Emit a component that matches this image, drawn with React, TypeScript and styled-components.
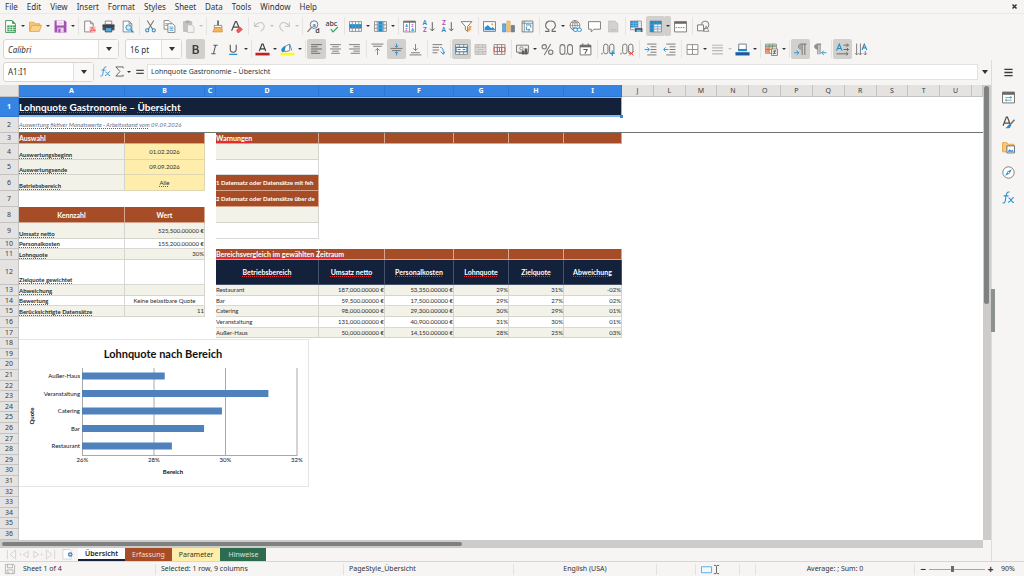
import React from "react";
import styled, { createGlobalStyle, css } from "styled-components";

const INK = "#3a3a38";
const GREY = "#797774";
const BLUE = "#1e8bcd";
const NAVY = "#14213a";
const RUST = "#a64d28";
const CREAM = "#f3f2e8";
const YELLOW = "#ffeeab";
const UI = `"Noto Sans", "Open Sans", sans-serif`;
const SHEET = `Lato, "Noto Sans", sans-serif`;

const Global = createGlobalStyle`
  * { box-sizing: border-box; }
  html, body, #root { height: 100%; margin: 0; }
  body { background: #f6f5f4; font-family: ${UI}; color: #2e3436; overflow: hidden; }
  button, input { font: inherit; color: inherit; margin: 0; padding: 0; border: 0; background: none; }
  svg { display: block; }
`;

/* ---------- icons ---------- */

const txt = (x: number, y: number, s: string, fill: string, size = 11, extra: React.SVGProps<SVGTextElement> = {}) => (
  <text x={x} y={y} fill={fill} fontSize={size} fontFamily="Noto Sans" {...extra}>{s}</text>
);
const lines = (d: string, stroke = INK, w = 1.6) => <path d={d} stroke={stroke} strokeWidth={w} fill="none" />;
const page = (stroke = GREY, fill = "#fafafa") => (
  <path d="M4 2h11l5 5v15H4zM15 2v5h5" fill={fill} stroke={stroke} strokeWidth="1.5" />
);
const grid = (stroke = GREY) => (
  <path d="M1 3h22v18H1zM1 9h22M1 15h22M6 3v18M12 3v18M18 3v18" fill="#fff" stroke={stroke} strokeWidth="1.4" />
);

const icons: Record<string, React.ReactNode> = {
  new: <><path d="M3 1h12l6 6v16H3z" fill="#fff" stroke="#309048" strokeWidth="1.6" /><path d="M15 1v6h6z" fill="#309048" /><path d="M6 10h15v11H6z" fill="#3f9f56" /><path d="M6 14h15M6 17.500h15M11 10v11M16 10v11" stroke="#fff" strokeWidth="1.1" /></>,
  open: <><path d="M1 20V4h8l2 3h9v4" fill="#f9c778" stroke="#e8a33d" strokeWidth="1.6" /><path d="M1 21l4-11h18l-4 11z" fill="#fbd28c" stroke="#e8a33d" strokeWidth="1.6" /></>,
  save: <><path d="M1 1h19l3 3v19H1z" fill="#a550b5" /><path d="M5 1h13v9H5z" fill="#fff" /><path d="M7 4h9M7 7h9" stroke="#d9a9e2" strokeWidth="1.3" /><path d="M6 14h12v9H6z" fill="#ead0ef" /><path d="M8 16h4v7H8z" fill="#a550b5" /></>,
  pdf: <><path d="M3 2h11l5 5v15H3zM14 2v5h5" fill="#fafafa" stroke={GREY} strokeWidth="1.500" /><path d="M12 12h11v11H12z" fill="#f7b4b3" /><path d="M13 21c3-2 4-5 4-8 1 5 3 6 6 6-4-1-7 0-10 2z" stroke="#ed3d3b" strokeWidth="1.300" fill="#fff" /></>,
  print: <><path d="M6 2h12v6H6z" fill="#fff" stroke={GREY} strokeWidth="1.6" /><path d="M1 8h22v11H1z" fill="#4c545a" /><path d="M1 11h22" stroke="#2f353a" strokeWidth="2" /><path d="M6 14h12v8H6z" fill="#56a9df" stroke="#33393d" strokeWidth="1.4" /></>,
  preview: <>{page()}<circle cx="14" cy="14" r="5" fill="#cfe6f7" stroke={BLUE} strokeWidth="1.7" /><path d="M18 18l5 5" stroke={BLUE} strokeWidth="2.2" /></>,
  cut: <><path d="M6 1l10 16M18 1L8 17" stroke={GREY} strokeWidth="2" /><circle cx="6" cy="19" r="3" fill="none" stroke={BLUE} strokeWidth="1.9" /><circle cx="18" cy="19" r="3" fill="none" stroke={BLUE} strokeWidth="1.9" /></>,
  copy: <><path d="M2 1h9l4 4v12H2z" fill="#fff" stroke={GREY} strokeWidth="1.5" /><path d="M4 7h6M4 10h5" stroke={BLUE} strokeWidth="1.3" /><path d="M9 7h9l4 4v12H9z" fill="#fff" stroke={GREY} strokeWidth="1.6" /><path d="M12 13h7M12 16h7M12 19h7" stroke={BLUE} strokeWidth="1.4" /></>,
  paste: <><path d="M3 3h15v18H3z" fill="#c4c4c2" stroke="#b0b0ae" strokeWidth="1.4" /><path d="M7 1h7v5H7z" fill="#aaa" /><path d="M10 9h8l4 4v10H10z" fill="#f2f2f1" stroke="#bcbcba" strokeWidth="1.4" /></>,
  clone: <><path d="M13 1v9" stroke="#5e5c5a" strokeWidth="3" /><path d="M6 10h14v4H6z" fill="#fff" stroke={GREY} strokeWidth="1.4" /><path d="M6 14h14l1 8H3c2-2 3-5 3-8z" fill="#f4b561" stroke="#d9912f" strokeWidth="1.4" /></>,
  clear: <><path d="M3 20L10 3h2l6 14M6 13h9" stroke="#4c4b49" strokeWidth="2.2" fill="none" /><path d="M12 19l6-6 5 4-6 6h-3z" fill="#ee5b58" stroke="#c9302d" /></>,
  undo: <path d="M3 4v8h8M3 12c5-8 12-9 16-5 4 5 1 10-5 14" stroke="#c6c5c3" strokeWidth="1.9" fill="none" />,
  redo: <path d="M21 4v8h-8M21 12C16 4 9 3 5 7c-4 5-1 10 5 14" stroke="#c6c5c3" strokeWidth="1.9" fill="none" />,
  find: <><circle cx="13" cy="8.500" r="7" fill="#f4fafe" stroke={GREY} strokeWidth="1.8" /><path d="M8 14l-7 8" stroke={GREY} strokeWidth="2.4" />{txt(9.5, 12, "a", BLUE, 11, { fontWeight: 700 })}{txt(15, 24, "d", INK, 13, { fontWeight: 600 })}</>,
  spell: <>{txt(-1, 11, "abc", INK, 13, { fontWeight: 500 })}<path d="M9 17l4 5 9-9" stroke="#36a266" strokeWidth="2.2" fill="none" /></>,
  row: <>{grid()}<path d="M1 8h22v7H1z" fill={BLUE} /><path d="M6 8v7M12 8v7M18 8v7" stroke="#6bb8e8" /></>,
  col: <>{grid()}<path d="M8 3h8v18H8z" fill={BLUE} /><path d="M8 9h8M8 15h8" stroke="#8ccaf0" /></>,
  sort: <><path d="M1 2h22v20H1z" fill="#fff" stroke={GREY} strokeWidth="1.5" /><path d="M1 2h22v3H1z" fill="#6a6967" /><path d="M12 4v18" stroke={GREY} strokeWidth="1.4" />{txt(4, 12, "A", BLUE, 7, { fontWeight: 700 })}{txt(4, 21, "Z", "#a550b5", 7, { fontWeight: 700 })}{txt(15, 12, "Z", "#a550b5", 7, { fontWeight: 700 })}{txt(15, 21, "A", BLUE, 7, { fontWeight: 700 })}</>,
  asc: <>{txt(1, 10, "A", BLUE, 12, { fontWeight: 600 })}{txt(2, 23, "Z", "#a550b5", 12, { fontWeight: 600 })}<path d="M19 4v16M15 16l4 4 4-4" stroke="#5d5c5a" strokeWidth="1.8" fill="none" /></>,
  desc: <>{txt(2, 10, "Z", "#a550b5", 12, { fontWeight: 600 })}{txt(1, 23, "A", BLUE, 12, { fontWeight: 600 })}<path d="M19 4v16M15 16l4 4 4-4" stroke="#5d5c5a" strokeWidth="1.8" fill="none" /></>,
  funnel: <><path d="M2 3h20l-8 9v9l-4-3v-6z" fill="#fff" stroke={GREY} strokeWidth="1.7" /><path d="M17 11h5l-3 5h3l-8 7 2-5h-2z" fill="#f4a93c" /></>,
  image: <><path d="M1 3h22v18H1z" fill="#fff" stroke={GREY} strokeWidth="1.7" /><path d="M3 19V14l6-5 6 6 3-2 4 4v2z" fill="#2f8fd0" /><circle cx="17" cy="8" r="2" fill="#f4a93c" /></>,
  chart: <><path d="M1 7h6v15H1z" fill="#5faee0" stroke="#337fb5" /><path d="M9 2h6v20H9z" fill="#f5c372" stroke="#dc9c3e" /><path d="M17 10h6v12h-6z" fill="#77808a" stroke="#5c636b" /></>,
  pivot: <><path d="M2 2h20v20H2z" fill="#fff" stroke={GREY} strokeWidth="1.7" /><path d="M2 6h20M6 2v20" stroke={GREY} strokeWidth="1.5" /><path d="M10 12v6h6M18 14V9h-6M12 7l-2 2 2 2M14 16l2 2-2 3" stroke={BLUE} strokeWidth="1.7" fill="none" /></>,
  omega: <path d="M2 21h7v-3C5 16 3 13 3 10c0-5 4-8 9-8s9 3 9 8c0 3-2 6-6 8v3h7" stroke="#6a6967" strokeWidth="1.9" fill="none" />,
  link: <><circle cx="11" cy="10" r="9" fill="#fff" stroke={GREY} strokeWidth="1.6" /><path d="M2 10h18M11 1v18M4 5h14M4 15h8M11 1c-6 5-6 13 0 18M11 1c6 5 6 13 0 18" stroke={GREY} strokeWidth="1.3" fill="none" /><rect x="8" y="15" width="8" height="6" rx="3" fill="#fff" stroke={BLUE} strokeWidth="1.7" /><rect x="15" y="15" width="8" height="6" rx="3" fill="#fff" stroke={BLUE} strokeWidth="1.7" /></>,
  comment: <path d="M1 3h22v14H11l-5 5v-5H1z" fill="#fff" stroke={GREY} strokeWidth="1.7" />,
  headfoot: <><path d="M3 2h12l5 5v15H3z" fill="#d2d2d0" stroke="#bbbab8" strokeWidth="1.4" /><path d="M6 18h11" stroke="#bbb" strokeWidth="2" /></>,
  printarea: <><path d="M1 2h20v16H1z" fill="#fff" stroke={GREY} strokeWidth="1.4" /><path d="M1 2h14v12H1z" fill={BLUE} /><path d="M1 6h20M1 10h20M1 14h20M6 2v16M11 2v16M16 2v16" stroke="#a7c9e0" strokeWidth="1.1" /><path d="M9 15h14v7H9z" fill="#4c545a" /><path d="M12 18h8v4h-8z" fill="#7bbde6" /></>,
  freeze: <><path d="M2 2h21v20H2z" fill="#fff" stroke={GREY} strokeWidth="1.4" /><path d="M2 2h21v6H2zM2 2h7v20H2z" fill={BLUE} /><path d="M2 8h21M9 2v20M16 2v20M2 15h21M9 12h14M9 18h14" stroke="#6b98b8" strokeWidth="1.2" /></>,
  split: <><path d="M1 3h22v19H1z" fill="#fff" stroke={GREY} strokeWidth="1.7" /><path d="M1 3h22v4H1z" fill="#6a6967" /><path d="M3 14h18" stroke={BLUE} strokeWidth="1.6" strokeDasharray="3 1.500" /></>,
  shapes: <><circle cx="15" cy="9" r="7" fill="none" stroke={GREY} strokeWidth="1.7" /><path d="M1 9h11v11H1z" fill="#fafafa" stroke={GREY} strokeWidth="1.7" /><path d="M12 21l5-10 5 10z" fill="none" stroke={GREY} strokeWidth="1.3" /></>,
  bold: <path transform="translate(3 3) scale(.75)" d="M5 1h8c8 0 8 9 3 10 7 1 7 12-2 12H5zM9 4v6h4c4 0 4-6 0-6zM9 13v7h4c5 0 5-7 0-7z" fill="#3f3e3c" fillRule="evenodd" />,
  italic: <path d="M10 4h8M6 20h8M14 4l-4 16" stroke="#5a5957" strokeWidth="1.900" fill="none" />,
  underline: <><path d="M6 3v8c0 8 11 8 11 0V3" stroke="#5a5957" strokeWidth="2" fill="none" /><path d="M4 21h15" stroke={BLUE} strokeWidth="2.200" /></>,
  fontcolor: <><path d="M6 15L11 2h2l5 13M8 11h8" stroke={INK} strokeWidth="2.200" fill="none" /><path d="M-1 18h26v5H-1z" fill="#c0211f" /></>,
  highlight: <><path d="M6 7l10-5v12l-9 2z" fill="#fff" stroke={GREY} strokeWidth="1.600" /><path d="M2 16c-2-6 2-9 6-9l-3 9zM16 2l4 12" fill={BLUE} stroke={BLUE} strokeWidth="1.500" /><path d="M-1 18h26v5H-1z" fill="#fbfb1e" /></>,
  left: lines("M2 3h20M2 7h12M2 11h20M2 15h12M2 19h17", "#5d5c5a"),
  center: lines("M2 3h20M6 7h12M2 11h20M6 15h12M4 19h16", "#6d6c6a"),
  right: lines("M2 3h20M10 7h12M2 11h20M10 15h12M5 19h17", "#6d6c6a"),
  top: <>{lines("M1 2h22M4 6h16", "#6d6c6a")}{lines("M12 22V10M8 14l4-4 4 4", BLUE)}</>,
  middle: <>{lines("M1 10h22M4 14h16", "#6d6c6a")}{lines("M12 1v7M9 5l3 3 3-3M12 23v-7M9 19l3-3 3 3", BLUE)}</>,
  bottom: <>{lines("M4 18h16M1 22h22", "#6d6c6a")}{lines("M12 2v12M8 10l4 4 4-4", BLUE)}</>,
  wrap: <>{lines("M1 3h18M1 8h12M1 13h12M1 18h9", "#6d6c6a")}{lines("M15 8c5 0 6 4 6 12M16 16l5 5 3-5", BLUE)}</>,
  mergecenter: <><path d="M1 3h22v18H1zM1 8h22M1 16h22M8 3v5M16 3v5M8 16v5M16 16v5" fill="#fff" stroke={GREY} strokeWidth="1.500" /><path d="M2 8h20v8H2z" fill="#fff" stroke={BLUE} strokeWidth="2" />{lines("M5 12h5M19 12h-5", BLUE, 2)}</>,
  merge: <path d="M2 3h20v18H2zM2 8h20M2 16h20M8 3v5M16 3v5M8 16v5M16 16v5M6 12h12" fill="#dcdcda" stroke="#b5b4b2" strokeWidth="1.500" />,
  unmerge: <><path d="M2 3h20v18H2zM8 3v18M16 3v18" fill="#fff" stroke={GREY} strokeWidth="1.500" /><path d="M2 8h20v8H2zM8 8v8M16 8v8M12 8v8" stroke="#e04a48" strokeWidth="1.700" fill="none" /></>,
  currency: <><path d="M1 4h22v13H1z" fill="#eee" stroke={GREY} strokeWidth="1.700" /><circle cx="10" cy="10" r="3" fill="none" stroke={GREY} strokeWidth="1.500" /><path d="M11 14h4v7h-4zM16 10h5v11h-5z" fill="#5d5c5a" /><path d="M5 19h18" stroke="#5d5c5a" strokeWidth="2" /></>,
  percent: <><circle cx="6" cy="7" r="4" fill="none" stroke={GREY} strokeWidth="2" /><circle cx="18" cy="17" r="4" fill="none" stroke={GREY} strokeWidth="2" /><path d="M18 2L6 22" stroke={GREY} strokeWidth="2" /></>,
  number: <><rect x="0" y="3" width="9" height="18" rx="4.500" fill="none" stroke={GREY} strokeWidth="1.900" /><rect x="14" y="3" width="9" height="18" rx="4.500" fill="none" stroke={GREY} strokeWidth="1.900" /><path d="M11.500 19v3" stroke={GREY} strokeWidth="1.700" /></>,
  date: <><path d="M2 4h20v18H2z" fill="#fff" stroke={GREY} strokeWidth="1.800" /><path d="M2 4h20v4H2z" fill="#6a6967" /><path d="M7 1v4M17 1v4" stroke="#6a6967" strokeWidth="2" /><path d="M8 12h7l-4 8" stroke="#5d5c5a" strokeWidth="1.900" fill="none" /></>,
  adddec: <><path d="M0 18v3" stroke={GREY} strokeWidth="2" /><rect x="3" y="2" width="8" height="18" rx="4" fill="none" stroke={GREY} strokeWidth="1.800" /><rect x="14" y="2" width="8" height="18" rx="4" fill="none" stroke={GREY} strokeWidth="1.800" /><path d="M14 19h10M19 14v10" stroke={BLUE} strokeWidth="2" /></>,
  deldec: <><path d="M0 18v3" stroke={GREY} strokeWidth="2" /><rect x="3" y="2" width="8" height="18" rx="4" fill="none" stroke={GREY} strokeWidth="1.800" /><rect x="14" y="2" width="8" height="18" rx="4" fill="none" stroke={GREY} strokeWidth="1.800" /><path d="M15 15l8 8M23 15l-8 8" stroke="#ed3d3b" strokeWidth="1.800" /></>,
  indent: <>{lines("M6 2h17M12 7h11M12 12h11M12 17h11M6 22h17", "#6d6c6a")}{lines("M1 12h8M6 8l4 4-4 4", BLUE)}</>,
  outdent: <>{lines("M6 2h17M12 7h11M12 12h11M12 17h11M6 22h17", "#6d6c6a")}{lines("M10 12H2M5 8l-4 4 4 4", BLUE)}</>,
  borders: <path d="M2 3h20v18H2zM12 3v18M2 12h20" fill="#fff" stroke="#8a8987" strokeWidth="1.700" />,
  borderstyle: lines("M2 4h20M2 9h20M2 14h20M2 20h20", "#b9b8b6", 2),
  bordercolor: <><path d="M5 2h14v12H5z" fill="#fff" stroke="#6a7a88" strokeWidth="1.700" /><path d="M4 11h16v4H4z" fill={BLUE} /><path d="M-1 17h26v6H-1z" fill="#1c5a9e" /></>,
  condformat: <><path d="M1 2h20v17H1z" fill="#fff" stroke={GREY} strokeWidth="1.400" /><path d="M2 3h18v4H2z" fill="#7fca8c" /><path d="M2 8h6v10H2z" fill="#ee8f6b" /><path d="M9 8h6v5H9z" fill="#f7cf7b" /><path d="M1 7h20M1 12h20M8 2v17M14 2v17" stroke={GREY} strokeWidth="1.200" /><path d="M12 11h11v12H12z" fill="#fff" stroke={GREY} strokeWidth="1.600" /><path d="M14 15h7M14 19h7M19 13l-3 8" stroke={INK} strokeWidth="1.300" /></>,
  ltr: <><path d="M23 2H13c-6 0-6 9 0 9h1M15 2v20M20 2v20" stroke="#6d6c6a" strokeWidth="1.700" fill="none" /><path d="M11 3h4v8h-3c-4-1-4-7-1-8z" fill="#a5a4a1" />{lines("M0 18h9M5 14l4 4-4 4", BLUE)}</>,
  rtl: <><path d="M15 2H8c-6 0-6 9 0 9h1M9 2v19M13 2v19" stroke="#6d6c6a" strokeWidth="1.700" fill="none" /><path d="M5 3h4v8H6C2 10 2 4 5 3z" fill="#8f8e8b" />{lines("M25 18h-9M20 14l-4 4 4 4", BLUE)}</>,
  textlr: <><path d="M1 14L6 2l5 12M3 10h6" stroke={BLUE} strokeWidth="2" fill="none" />{lines("M14 4h9M20 1l3 3-3 3M14 12h9M20 9l3 3-3 3M1 20h21M19 17l3 3-3 3", "#5d5c5a")}</>,
  texttb: <><path d="M13 13l4-11 5 11M14 9h6" stroke={BLUE} strokeWidth="2" fill="none" />{lines("M3 1v21M0 19l3 3 3-3M10 1v21M7 19l3 3 3-3M19 15v7M16 19l3 3 3-3", "#6d6c6a")}</>,
  fx: <><path d="M1 22c5 1 5-3 6-10s2-11 7-10M3 9h9" stroke="#2a8fd0" strokeWidth="2" fill="none" /><path d="M12 13c4-1 5 9 10 8M22 12c-4 0-6 9-11 9" stroke="#2a8fd0" strokeWidth="2" fill="none" /></>,
  sigma: <path d="M20 5V2H4l9 10-9 10h16v-3" stroke="#5d5c5a" strokeWidth="2" fill="none" />,
  equals: <path d="M3 8h18M3 15h18" stroke="#4d4c4a" strokeWidth="3" />,
  menu: <path d="M3 5h18M3 12h18M3 19h18" stroke={INK} strokeWidth="2.800" />,
  properties: <><path d="M1 2h22v20H1z" fill="#fff" stroke="#6a6967" strokeWidth="1.700" /><path d="M1 2h22v5H1z" fill="#6a6967" /><path d="M6 12h12M6 17h12M15 10l3 2-3 2M9 15l-3 2 3 2" stroke="#3d9ab8" strokeWidth="1.400" fill="none" /></>,
  styles: <><path d="M2 18L8 2h2l6 16M5 13h8" stroke="#4d4c4a" strokeWidth="2.200" fill="none" /><path d="M23 7l-8 9" stroke={GREY} strokeWidth="3" /><path d="M15 15c2 1 2 4 0 6s-5 2-9 1c4-1 4-6 9-7z" fill="#2f86d0" /></>,
  gallery: <><path d="M1 20V3h8l2 3h11v14z" fill="#f9c778" stroke="#e8a33d" strokeWidth="1.600" /><path d="M9 9h14v13H9z" fill="#fff" stroke="#5d6d78" strokeWidth="1.700" /><path d="M10 20l4-5 3 3 2-2 3 4z" fill="#2f86d0" /></>,
  compass: <><circle cx="12" cy="12" r="10.500" fill="#fff" stroke={GREY} strokeWidth="1.700" /><path d="M18 6l-4 8-8 4 4-8z" fill={BLUE} /><circle cx="12" cy="12" r="1.600" fill="#fff" /></>,
  disk: <path d="M1 1h20l2 2v20H1zM6 1v8h12V1M5 23v-9h14v9M9 18v5" fill="none" stroke="#a3a2a0" strokeWidth="1.700" />,
  first: <path d="M3 2v20M21 2L9 12l12 10z" stroke="#d0cfcc" strokeWidth="1.800" fill="none" />,
  prev: <path d="M20 5L9 12l11 7zM3 9v6" stroke="#d0cfcc" strokeWidth="1.800" fill="none" />,
  next: <path d="M4 5l11 7-11 7zM21 9v6" stroke="#d0cfcc" strokeWidth="1.800" fill="none" />,
  last: <path d="M21 2v20M3 2l12 10L3 22z" stroke="#d0cfcc" strokeWidth="1.800" fill="none" />,
  addsheet: <><path d="M2 1h14l4 4v17H2z" fill="#fff" stroke="#c9c8c6" strokeWidth="1.500" /><circle cx="18" cy="12" r="5" fill="#3f7fae" /><path d="M15 12h6M18 9v6" stroke="#d8ecf8" strokeWidth="1.500" /></>,
  selmode: <path d="M1 6h22v13H1z" fill="#f2f9fd" stroke="#55a9d6" strokeWidth="2" />,
  ibeam: <path d="M5 1h5l2 2 2-2h5M12 3v18M5 23h5l2-2 2 2h5" stroke={INK} strokeWidth="2" fill="none" />,
};

const Glyph = styled.svg<{ $size?: number }>`
  width: ${(p) => p.$size ?? 13}px;
  height: ${(p) => p.$size ?? 13}px;
  flex: none;
  overflow: visible;
`;
const Icon = ({ name, size }: { name: string; size?: number }) => (
  <Glyph $size={size} viewBox="0 0 24 24" aria-hidden="true">{icons[name]}</Glyph>
);

/* ---------- menu and toolbars ---------- */

const Shell = styled.div`
  display: flex;
  flex-direction: column;
  height: 100vh;
`;
const MenuBar = styled.nav`
  display: flex;
  align-items: center;
  height: 14px;
  flex: none;
  padding: 0 6px 0 5px;
  gap: 9px;
  font-size: 8px;
  line-height: 12px;
  border-bottom: 1px solid #eceae8;
`;
const CloseButton = styled.button`
  margin-left: auto;
  width: 7px;
  height: 7px;
`;
const Toolbar = styled.div<{ $h: number }>`
  display: flex;
  align-items: center;
  height: ${(p) => p.$h}px;
  flex: none;
  padding-left: 1px;
`;
const Tool = styled.button<{ $on?: boolean; $w?: number }>`
  display: grid;
  place-items: center;
  width: ${(p) => p.$w ?? 19}px;
  height: 20px;
  flex: none;
  border-radius: 2px;
  background: ${(p) => (p.$on ? "#d2d0cd" : "transparent")};
`;
const DropTool = styled.button<{ $on?: boolean; $off?: boolean }>`
  display: grid;
  place-items: center;
  width: 6px;
  height: 20px;
  flex: none;
  border-radius: 0 2px 2px 0;
  background: ${(p) => (p.$on ? "#d2d0cd" : "transparent")};
  &::after {
    content: "";
    border: 2px solid transparent;
    border-top-color: ${(p) => (p.$off ? "#c4c3c1" : "#2e3436")};
    border-bottom: 0;
  }
`;
const Divider = styled.span`
  width: 1px;
  height: 18px;
  margin: 0 1px 0 2px;
  flex: none;
  background: #e6e4e2;
`;
const Combo = styled.div<{ $w: number }>`
  display: flex;
  width: ${(p) => p.$w}px;
  height: 20px;
  flex: none;
  margin: 0 4px 0 2px;
  background: #fff;
  border: 1px solid #d8d5d2;
  border-radius: 3px;
  font-size: 8px;
`;
const ComboInput = styled.input<{ $italic?: boolean }>`
  flex: 1;
  min-width: 0;
  padding-left: 4px;
  outline: 0;
  font-style: ${(p) => (p.$italic ? "italic" : "normal")};
`;
const ComboArrow = styled.button`
  display: grid;
  place-items: center;
  width: 20px;
  border-left: 1px solid #e2e0dd;
  background: #faf9f8;
  &::after {
    content: "";
    border: 3px solid transparent;
    border-top: 4px solid #2e3436;
    border-bottom: 0;
  }
`;

const menus = ["File", "Edit", "View", "Insert", "Format", "Styles", "Sheet", "Data", "Tools", "Window", "Help"];

/* "|" is a divider; "v" adds a drop-down arrow, "*" marks a pressed tool, "-" a disabled arrow */
const standardTools = "new:v open:v save:v | pdf print preview | cut copy paste:v- | clone clear | undo:v- redo:v- | find spell | row:v col:v | sort asc desc funnel | image chart pivot | omega:v link comment headfoot | printarea freeze:v* split | shapes";
const formatTools = "bold:* italic underline:v | fontcolor:v highlight:v | left:* center right | top middle:* bottom | wrap | mergecenter:* merge unmerge | currency:v percent number date | adddec deldec | indent outdent | borders:v borderstyle:v- bordercolor:v | condformat:v | ltr:* rtl | textlr:* texttb";

const Tools = ({ spec }: { spec: string }) => (
  <>
    {spec.split(" ").map((item, i) => {
      if (item === "|") return <Divider key={i} />;
      const [name, flags = ""] = item.split(":");
      const on = flags.includes("*");
      return (
        <React.Fragment key={i}>
          <Tool $on={on} aria-label={name}><Icon name={name} /></Tool>
          {flags.includes("v") && <DropTool $on={on} $off={flags.includes("-")} aria-label={`${name} options`} />}
        </React.Fragment>
      );
    })}
  </>
);

/* ---------- formula bar, sidebar ---------- */

const Workspace = styled.div`
  display: flex;
  flex: 1;
  min-height: 0;
`;
const Editor = styled.main`
  display: flex;
  flex-direction: column;
  flex: 1;
  min-width: 0;
`;
const FormulaBar = styled.div`
  display: flex;
  align-items: center;
  height: 25px;
  flex: none;
  padding: 0 0 2px 1px;
`;
const FormulaInput = styled.input`
  flex: 1;
  min-width: 0;
  height: 16px;
  padding: 0 3px;
  background: #fff;
  border: 1px solid #e4e2df;
  font-size: 7px;
  outline: 0;
`;
const FormulaArrow = styled(ComboArrow)`
  width: 13px;
  border: 0;
  background: none;
`;
const Sidebar = styled.aside`
  position: relative;
  display: flex;
  flex-direction: column;
  align-items: center;
  width: 33px;
  flex: none;
  border-left: 1px solid #dedcd9;
`;
const SideTool = styled(Tool)`
  height: 25px;
`;
const Grip = styled.span`
  position: absolute;
  left: -1px;
  top: 229px;
  width: 4px;
  height: 43px;
  background: #8d918f;
`;

/* ---------- sheet ---------- */

const SheetRow = styled.div`
  display: flex;
  flex: 1;
  min-height: 0;
`;
const SheetView = styled.div`
  position: relative;
  flex: 1;
  min-width: 0;
  overflow: hidden;
  background: #fff;
`;
const Grid = styled.table`
  width: 100%;
  table-layout: fixed;
  border-collapse: separate;
  border-spacing: 0;
  font-family: ${SHEET};
  font-size: 6px;
  line-height: 8px;
  color: #2c2c2c;
`;
const Row = styled.tr<{ $h: number }>`
  height: ${(p) => p.$h}px;
`;
const Head = styled.th<{ $on?: boolean }>`
  padding: 0;
  overflow: hidden;
  font-family: ${UI};
  font-size: 7px;
  font-weight: ${(p) => (p.$on ? 700 : 400)};
  color: ${(p) => (p.$on ? "#fff" : "#3c3c3c")};
  background: ${(p) => (p.$on ? "#3584e4" : "#e4e3e2")};
  border-right: 1px solid ${(p) => (p.$on ? "#2f78d2" : "#c4c3c1")};
  border-bottom: 1px solid ${(p) => (p.$on ? "#2f78d2" : "#c4c3c1")};
`;

type Tone = "cream" | "white" | "rust" | "navy" | "yellow";
const tones: Record<Tone, ReturnType<typeof css>> = {
  cream: css`background: ${CREAM}; border-color: #d6d5cd;`,
  white: css`background: #fff; border-color: #d9d8d6;`,
  rust: css`background: ${RUST}; color: #fff; border-color: #d8a58f;`,
  navy: css`background: ${NAVY}; color: #fff; border-color: #46536c;`,
  yellow: css`background: ${YELLOW}; border-color: #dfd7b0;`,
};
const Cell = styled.td<{ $tone?: Tone; $align?: string; $bottom?: boolean; $bold?: boolean; $heading?: boolean }>`
  padding: 0;
  white-space: nowrap;
  font-size: ${(p) => (p.$heading ? 7 : 6)}px;
  text-align: ${(p) => p.$align ?? "left"};
  vertical-align: ${(p) => (p.$bottom ? "bottom" : "middle")};
  font-weight: ${(p) => (p.$bold || p.$heading ? 700 : 400)};
  ${(p) => p.$tone && css`border: 0 solid; border-width: 0 1px 1px 0; ${tones[p.$tone]}`}
`;
const Typo = styled.span`
  text-decoration: underline dotted #e8262c 1px;
  text-underline-offset: 1px;
  text-decoration-skip-ink: none;
`;
const TitleCell = styled.td`
  position: relative;
  padding: 0;
  color: #fff;
  background: ${NAVY};
  font-size: 10px;
  line-height: 14px;
  font-weight: 700;
  white-space: nowrap;
  border: 1px solid #8ab4ea;
  border-width: 1px 1px 2px 0;
  &::after {
    content: "";
    position: absolute;
    right: -2px;
    bottom: -3px;
    width: 3px;
    height: 3px;
    background: #3584e4;
  }
`;
const FrozenCell = styled.td`
  padding: 0;
  white-space: nowrap;
  font-style: italic;
  color: #66708a;
  border-bottom: 1px solid #6f7371;
`;

type CellData = { t?: string; tone?: Tone; align?: "center" | "right"; bottom?: boolean; bold?: boolean; heading?: boolean; typo?: boolean };

const cols: [string, number | null][] = [
  ["A", 106], ["B", 80], ["C", 11], ["D", 103], ["E", 66], ["F", 69], ["G", 55], ["H", 55], ["I", 58],
  ...["J", "L", "M", "N", "O", "P", "Q", "R", "S", "T", "U"].map((c): [string, number | null] => [c, null]),
];
const heights = [16, 16, 11, 16, 15, 16, 16, 16, 16, 10, 11, 25, 11, 10, 11, 11, 10, 11, 10, 11, 11, 10, 11, 10, 11, 11, 10, 11, 10, 11, 11, 10, 11, 10, 11, 11];

const label = (t: string, tone: Tone): CellData => ({ t, tone, bottom: true, bold: true, typo: true });
const num = (t: string, tone: Tone): CellData => ({ t, tone, align: "right" });
const head = (t: string, tone: Tone): CellData => ({ t, tone, align: "center", heading: true, typo: true });
const rustRow = (t: string): CellData[] => [{ t, tone: "rust", heading: true, typo: true }, ...Array(5).fill({ tone: "rust" })];
const none: CellData = {};
const compare = (name: string, tone: Tone, ...v: string[]): CellData[] => [{ t: name, tone }, ...v.map((x) => num(x, tone))];

const rows: Record<number, CellData[]> = {
  3: [{ t: "Auswahl", tone: "rust", heading: true, typo: true }, { tone: "rust" }, none, ...rustRow("Warnungen")],
  4: [label("Auswertungsbeginn", "cream"), { t: "01.02.2026", tone: "yellow", align: "center" }, none, { tone: "cream" }],
  5: [label("Auswertungsende", "cream"), { t: "09.09.2026", tone: "yellow", align: "center" }, none, { tone: "white" }],
  6: [label("Betriebsbereich", "cream"), { t: "Alle", tone: "yellow", align: "center", typo: true }, none, { t: "1 Datensatz oder Datensätze mit feh", tone: "rust", bold: true }],
  7: [none, none, none, { t: "2 Datensatz oder Datensätze über de", tone: "rust", bold: true }],
  8: [head("Kennzahl", "rust"), head("Wert", "rust"), none, { tone: "cream" }],
  9: [label("Umsatz netto", "cream"), num("525,500.00000 €", "cream"), none, { tone: "white" }],
  10: [label("Personalkosten", "white"), num("155,200.00000 €", "white")],
  11: [label("Lohnquote", "cream"), num("30%", "cream"), none, ...rustRow("Bereichsvergleich im gewählten Zeitraum")],
  12: [label("Zielquote gewichtet", "white"), { tone: "white" }, none, head("Betriebsbereich", "navy"), head("Umsatz netto", "navy"), head("Personalkosten", "navy"), head("Lohnquote", "navy"), head("Zielquote", "navy"), head("Abweichung", "navy")],
  13: [label("Abweichung", "cream"), { tone: "cream" }, none, ...compare("Restaurant", "cream", "187,000.00000 €", "53,350.00000 €", "29%", "31%", "-02%")],
  14: [label("Bewertung", "white"), { t: "Keine belastbare Quote", tone: "white", align: "center" }, none, ...compare("Bar", "white", "59,500.00000 €", "17,500.00000 €", "29%", "27%", "02%")],
  15: [label("Berücksichtigte Datensätze", "cream"), num("11", "cream"), none, ...compare("Catering", "cream", "98,000.00000 €", "29,300.00000 €", "30%", "29%", "01%")],
  16: [none, none, none, ...compare("Veranstaltung", "white", "131,000.00000 €", "40,900.00000 €", "31%", "30%", "01%")],
  17: [none, none, none, ...compare("Außer-Haus", "cream", "50,000.00000 €", "14,150.00000 €", "28%", "25%", "03%")],
};

/* ---------- chart ---------- */

const ChartFrame = styled.figure`
  position: absolute;
  left: 19px;
  top: 254px;
  width: 290px;
  height: 148px;
  margin: 0;
  background: #fff;
  border: 1px solid #e6e5e3;
  border-left: 0;
`;
const bars: [string, number][] = [["Außer-Haus", 28.3], ["Veranstaltung", 31.2], ["Catering", 29.9], ["Bar", 29.4], ["Restaurant", 28.5]];
const px = (v: number) => 63.5 + ((v - 26) / 6) * 214.5;

const Chart = () => (
  <ChartFrame>
    <svg width="289" height="146" viewBox="0 0 289 146" fontFamily="Lato, sans-serif" fontSize="6" fill="#111" role="img" aria-label="Lohnquote nach Bereich">
      <text x="144" y="18" fontSize="11" fontWeight="700" textAnchor="middle">Lohnquote nach Bereich</text>
      {[26, 28, 30, 32].map((v) => (
        <g key={v}>
          <path d={`M${px(v)} 28v88`} stroke="#a9a9a9" />
          <text x={px(v)} y="122" textAnchor="middle">{v}%</text>
        </g>
      ))}
      <path d="M63 115.500h215" stroke="#a9a9a9" />
      {bars.map(([name, v], i) => (
        <g key={name}>
          <rect x="63" y={32.5 + i * 17.5} width={px(v) - 63} height="7" fill="#4f81bd" />
          <text x="61" y={38 + i * 17.5} textAnchor="end">{name}</text>
        </g>
      ))}
      <text x="154" y="134" fontWeight="700" textAnchor="middle">Bereich</text>
      <text transform="translate(15 76) rotate(-90)" fontWeight="700" textAnchor="middle">Quote</text>
    </svg>
  </ChartFrame>
);

/* ---------- scrollbars, tabs, status ---------- */

const VScroll = styled.div`
  width: 8px;
  flex: none;
  padding: 1px 2px 0 1px;
  background: #cdcccb;
  &::after {
    content: "";
    display: block;
    height: 48%;
    border-radius: 3px;
    background: #7d8180;
  }
`;
const HScroll = styled.div`
  height: 8px;
  flex: none;
  margin-right: 8px;
  padding: 2px;
  background: #cdcccb;
  &::after {
    content: "";
    display: block;
    width: 47%;
    height: 4px;
    border-radius: 2px;
    background: #7d8180;
  }
`;
const TabBar = styled.div`
  display: flex;
  align-items: stretch;
  height: 13px;
  flex: none;
  padding-left: 5px;
`;
const TabNav = styled.button`
  display: grid;
  place-items: center;
  width: 13px;
`;
const AddSheet = styled(TabNav)`
  width: 21px;
`;
const Tab = styled.button<{ $bg: string; $fg: string; $on?: boolean }>`
  padding: 0 7px;
  min-width: 46px;
  font-size: 7px;
  line-height: 11px;
  font-weight: ${(p) => (p.$on ? 600 : 400)};
  color: ${(p) => p.$fg};
  background: ${(p) => p.$bg};
  border-bottom: ${(p) => (p.$on ? `2px solid ${NAVY}` : "0")};
`;
const StatusBar = styled.footer`
  display: flex;
  align-items: center;
  height: 15px;
  flex: none;
  font-size: 7px;
  line-height: 10px;
  border-top: 1px solid #d8d6d3;
`;
const StatusItem = styled.div<{ $w?: number; $grow?: boolean; $center?: boolean; $gap?: number }>`
  display: flex;
  align-items: center;
  gap: ${(p) => p.$gap ?? 0}px;
  height: 11px;
  padding: 0 5px;
  white-space: nowrap;
  justify-content: ${(p) => (p.$center ? "center" : "flex-start")};
  ${(p) => (p.$grow ? css`flex: 1 0 0;` : css`flex: none; width: ${p.$w}px;`)}
  & + & { border-left: 1px solid #e4e2df; }
`;
const ZoomRange = styled.input`
  appearance: none;
  width: 56px;
  height: 9px;
  background: linear-gradient(#a5a4a2, #a5a4a2) center / 100% 1px no-repeat;
  &::-webkit-slider-thumb {
    appearance: none;
    width: 3px;
    height: 6px;
    background: #6c6b69;
  }
`;
const ZoomButton = styled.button`
  width: 7px;
  font-size: 10px;
  font-weight: 700;
  line-height: 10px;
`;
const ZoomValue = styled.span`
  margin-left: 5px;
`;

export default function App() {
  return (
    <Shell>
      <Global />
      <MenuBar>
        {menus.map((m) => <button key={m}>{m}</button>)}
        <CloseButton aria-label="Close">
          <svg viewBox="0 0 7 7"><path d="M1.500 1.500l4 4M5.500 1.500l-4 4" stroke="#2e3436" strokeWidth="1.500" /></svg>
        </CloseButton>
      </MenuBar>
      <Toolbar $h={24}><Tools spec={standardTools} /></Toolbar>
      <Toolbar $h={22}>
        <Combo $w={116}>
          <ComboInput $italic aria-label="Font name" defaultValue="Calibri" />
          <ComboArrow aria-label="Font list" />
        </Combo>
        <Combo $w={57}>
          <ComboInput aria-label="Font size" defaultValue="16 pt" />
          <ComboArrow aria-label="Size list" />
        </Combo>
        <Tools spec={formatTools} />
      </Toolbar>
      <Workspace>
        <Editor>
          <FormulaBar>
            <Combo $w={91}>
              <ComboInput aria-label="Name box" defaultValue="A1:I1" />
              <ComboArrow aria-label="Named ranges" />
            </Combo>
            <Tool $w={15} aria-label="Function wizard"><Icon name="fx" size={11} /></Tool>
            <Tool $w={13} aria-label="Select function"><Icon name="sigma" size={11} /></Tool>
            <DropTool aria-label="Select function options" />
            <Tool $w={15} aria-label="Formula"><Icon name="equals" size={10} /></Tool>
            <FormulaInput aria-label="Formula" defaultValue="Lohnquote Gastronomie – Übersicht" />
            <FormulaArrow aria-label="Expand formula bar" />
          </FormulaBar>
          <SheetRow>
            <SheetView>
              <Grid>
                <colgroup>
                  <col style={{ width: 19 }} />
                  {cols.map(([c, w]) => <col key={c} style={w ? { width: w } : undefined} />)}
                  <col style={{ width: 11 }} />
                </colgroup>
                <thead>
                  <Row $h={12}>
                    <Head />
                    {cols.map(([c], i) => <Head key={c} $on={i < 9} scope="col">{c}</Head>)}
                    <Head />
                  </Row>
                </thead>
                <tbody>
                  <Row $h={20}>
                    <Head $on scope="row">1</Head>
                    <TitleCell colSpan={9}><Typo>Lohnquote</Typo> <Typo>Gastronomie</Typo> – <Typo>Übersicht</Typo></TitleCell>
                  </Row>
                  <Row $h={16}>
                    <Head scope="row">2</Head>
                    <FrozenCell colSpan={21}><Typo>Auswertung fiktiver Monatswerte · Arbeitsstand vom</Typo> 09.09.2026</FrozenCell>
                  </Row>
                  {heights.slice(2).map((h, i) => {
                    const n = i + 3;
                    return (
                      <Row key={n} $h={h}>
                        <Head scope="row">{n}</Head>
                        {(rows[n] ?? []).map((c, j) => (
                          <Cell key={j} $tone={c.tone} $align={c.align} $bottom={c.bottom} $bold={c.bold} $heading={c.heading}>
                            {c.typo ? <Typo>{c.t}</Typo> : c.t}
                          </Cell>
                        ))}
                      </Row>
                    );
                  })}
                </tbody>
              </Grid>
              <Chart />
            </SheetView>
            <VScroll />
          </SheetRow>
          <HScroll />
          <TabBar>
            {["first", "prev", "next", "last"].map((n) => <TabNav key={n} aria-label={`${n} sheet`}><Icon name={n} size={11} /></TabNav>)}
            <AddSheet aria-label="Add sheet"><Icon name="addsheet" size={11} /></AddSheet>
            <Tab $bg="#fff" $fg="#1d1d1d" $on>Übersicht</Tab>
            <Tab $bg={RUST} $fg="#f6dfd5">Erfassung</Tab>
            <Tab $bg={YELLOW} $fg="#3a3520">Parameter</Tab>
            <Tab $bg="#2d6b4f" $fg="#d5e8de">Hinweise</Tab>
          </TabBar>
        </Editor>
        <Sidebar>
          {["menu", "properties", "styles", "gallery", "compass", "fx"].map((n) => (
            <SideTool key={n} aria-label={n}><Icon name={n} size={n === "menu" ? 11 : 13} /></SideTool>
          ))}
          <Grip />
        </Sidebar>
      </Workspace>
      <StatusBar>
        <StatusItem $w={155} $gap={8}><Icon name="disk" size={10} /><span>Sheet 1 of 4</span></StatusItem>
        <StatusItem $w={188}>Selected: 1 row, 9 columns</StatusItem>
        <StatusItem $w={170}>PageStyle_Übersicht</StatusItem>
        <StatusItem $w={143} $center>English (USA)</StatusItem>
        <StatusItem $w={39} />
        <StatusItem $w={44}><Icon name="selmode" size={11} /><Icon name="ibeam" size={9} /></StatusItem>
        <StatusItem $w={16} />
        <StatusItem $grow $center>Average: ; Sum: 0</StatusItem>
        <StatusItem $w={110} $gap={2}>
          <ZoomButton aria-label="Zoom out">−</ZoomButton>
          <ZoomRange type="range" aria-label="Zoom" min={0} max={100} defaultValue={41} />
          <ZoomButton aria-label="Zoom in">+</ZoomButton>
          <ZoomValue>90%</ZoomValue>
        </StatusItem>
      </StatusBar>
    </Shell>
  );
}
